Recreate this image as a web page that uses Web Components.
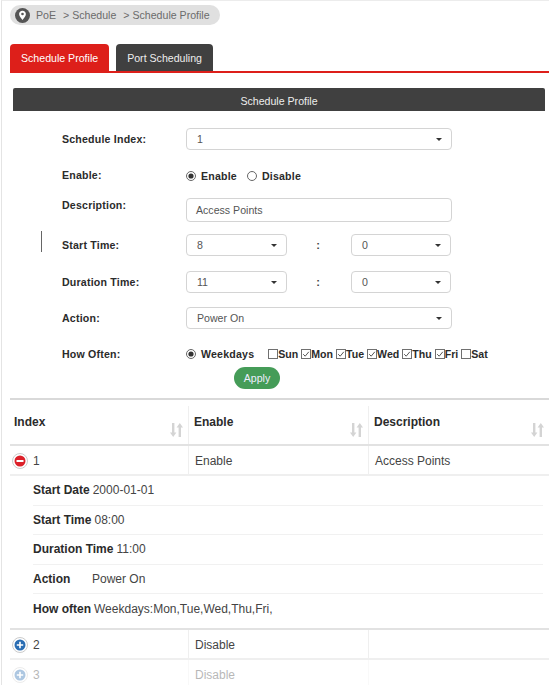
<!DOCTYPE html>
<html>
<head>
<meta charset="utf-8">
<title>Schedule Profile</title>
<style>
    html, body { margin: 0; height: 685px; overflow: hidden; background: #fff; }
    body { font-family: "Liberation Sans", Arial, sans-serif; color: #333; }
    .frame {
        display: block;
        height: 684px;
        margin-left: 1px;
        padding-left: 8px;
        border-top: 1px solid #ececec;
        border-left: 1px solid #e4e4e4;
        width: 539px;
    }
</style>
</head>
<body>
<div class="frame">
    <crumb-bar>
        <span>PoE</span><span>&gt; Schedule</span><span>&gt; Schedule Profile</span>
    </crumb-bar>
    <tab-bar>
        <tab-item active>Schedule Profile</tab-item>
        <tab-item>Port Scheduling</tab-item>
    </tab-bar>
    <panel-heading>Schedule Profile</panel-heading>
    <profile-form>
        <form-row label="Schedule Index:" style="--top:0px">
            <drop-select value="1"></drop-select>
        </form-row>
        <form-row label="Enable:" style="--top:15px;--lift:2px">
            <radio-option checked>Enable</radio-option>
            <radio-option>Disable</radio-option>
        </form-row>
        <form-row label="Description:" style="--top:11px;--lift:10px">
            <text-box value="Access Points"></text-box>
        </form-row>
        <form-row label="Start Time:" style="--top:12px" marked>
            <time-pair hour="8" minute="0"></time-pair>
        </form-row>
        <form-row label="Duration Time:" style="--top:15px">
            <time-pair hour="11" minute="0"></time-pair>
        </form-row>
        <form-row label="Action:" style="--top:14px">
            <drop-select value="Power On"></drop-select>
        </form-row>
        <form-row label="How Often:" style="--top:14px">
            <radio-option checked style="--after:14px">Weekdays</radio-option>
            <day-check>Sun</day-check>
            <day-check checked>Mon</day-check>
            <day-check checked>Tue</day-check>
            <day-check checked>Wed</day-check>
            <day-check checked>Thu</day-check>
            <day-check checked>Fri</day-check>
            <day-check>Sat</day-check>
        </form-row>
        <apply-button>Apply</apply-button>
    </profile-form>
    <data-table>
        <head-row>
            <head-cell>Index</head-cell>
            <head-cell>Enable</head-cell>
            <head-cell>Description</head-cell>
        </head-row>
        <body-row state="open" index="1" enable="Enable" description="Access Points"></body-row>
        <detail-list>
            <detail-item label="Start Date">2000-01-01</detail-item>
            <detail-item label="Start Time">08:00</detail-item>
            <detail-item label="Duration Time">11:00</detail-item>
            <detail-item label="Action" wide>Power On</detail-item>
            <detail-item label="How often" last>Weekdays:Mon,Tue,Wed,Thu,Fri,</detail-item>
        </detail-list>
        <body-row state="closed" index="2" enable="Disable"></body-row>
        <body-row state="closed" index="3" enable="Disable" style="opacity:.38"></body-row>
    </data-table>
</div>

<script>
class CrumbBar extends HTMLElement {
    constructor() {
        super()
        this.attachShadow({ mode: 'open' })
    }
    connectedCallback() {
        this.shadowRoot.innerHTML = `
            <style>
                :host {
                    display: flex;
                    align-items: center;
                    width: 210px;
                    height: 20px;
                    margin-top: 4px;
                    box-sizing: border-box;
                    padding-left: 5px;
                    border-radius: 10px;
                    background: #e0e0e0;
                    font-size: 10.6px;
                    color: #6b6b6b;
                }
                svg { width: 15px; height: 15px; margin-right: 6px; flex: none; }
                .items { display: flex; gap: 7px; white-space: nowrap; }
                ::slotted(span) { display: block; }
            </style>
            <svg viewBox="0 0 15 15">
                <circle cx="7.5" cy="7.5" r="7.5" fill="#555"/>
                <path d="M7.5 2.8c-2 0-3.4 1.4-3.4 3.3 0 2.2 2.3 4.4 3.4 6 1.1-1.6 3.4-3.8 3.4-6 0-1.9-1.4-3.3-3.4-3.3z" fill="#fff"/>
                <circle cx="7.5" cy="6" r="1.3" fill="#555"/>
            </svg>
            <div class="items"><slot></slot></div>
        `
    }
}
customElements.define('crumb-bar', CrumbBar)

class TabBar extends HTMLElement {
    constructor() {
        super()
        this.attachShadow({ mode: 'open' })
    }
    connectedCallback() {
        this.shadowRoot.innerHTML = `
            <style>
                :host {
                    display: flex;
                    gap: 7px;
                    align-items: flex-start;
                    height: 27px;
                    margin-top: 19px;
                    border-bottom: 2px solid #dd1f1a;
                }
            </style>
            <slot></slot>
        `
    }
}
customElements.define('tab-bar', TabBar)

class TabItem extends HTMLElement {
    constructor() {
        super()
        this.attachShadow({ mode: 'open' })
    }
    connectedCallback() {
        this.shadowRoot.innerHTML = `
            <style>
                :host {
                    display: block;
                    height: 27px;
                    line-height: 28px;
                    padding: 0 11px;
                    border-radius: 4px 4px 0 0;
                    background: #404040;
                    color: #eee;
                    font-size: 10.6px;
                    white-space: nowrap;
                }
                :host([active]) {
                    height: 29px;
                    background: #dd1f1a;
                    color: #fff;
                }
            </style>
            <slot></slot>
        `
    }
}
customElements.define('tab-item', TabItem)

class PanelHeading extends HTMLElement {
    constructor() {
        super()
        this.attachShadow({ mode: 'open' })
    }
    connectedCallback() {
        this.shadowRoot.innerHTML = `
            <style>
                :host {
                    display: block;
                    width: 532px;
                    height: 23px;
                    margin: 15px 0 0 3px;
                    border-radius: 2px 2px 0 0;
                    background: #404040;
                    color: #eee;
                    text-align: center;
                    font-size: 10.6px;
                    line-height: 26px;
                }
            </style>
            <slot></slot>
        `
    }
}
customElements.define('panel-heading', PanelHeading)

class ProfileForm extends HTMLElement {
    constructor() {
        super()
        this.attachShadow({ mode: 'open' })
    }
    connectedCallback() {
        this.shadowRoot.innerHTML = `
            <style>
                :host {
                    display: block;
                    position: relative;
                    margin-top: 17px;
                    padding-left: 52px;
                }
            </style>
            <slot></slot>
        `
    }
}
customElements.define('profile-form', ProfileForm)

class FormRow extends HTMLElement {
    constructor() {
        super()
        this.attachShadow({ mode: 'open' })
    }
    connectedCallback() {
        this.shadowRoot.innerHTML = `
            <style>
                :host {
                    display: flex;
                    align-items: center;
                    position: relative;
                    min-height: 22px;
                    margin-top: var(--top, 0);
                }
                .label {
                    width: 124px;
                    flex: none;
                    padding-bottom: var(--lift, 0);
                    font-size: 10.6px;
                    font-weight: bold;
                    letter-spacing: .2px;
                    color: #2b2b2b;
                }
                .tick {
                    display: none;
                    position: absolute;
                    left: -21px;
                    top: -3px;
                    width: 1px;
                    height: 21px;
                    background: #666;
                }
                :host([marked]) .tick { display: block; }
                .control { display: flex; align-items: center; flex: 1; }
            </style>
            <div class="tick"></div>
            <div class="label">${this.getAttribute('label')}</div>
            <div class="control"><slot></slot></div>
        `
    }
}
customElements.define('form-row', FormRow)

class DropSelect extends HTMLElement {
    constructor() {
        super()
        this.attachShadow({ mode: 'open' })
    }
    connectedCallback() {
        this.shadowRoot.innerHTML = `
            <style>
                :host {
                    display: flex;
                    align-items: center;
                    justify-content: space-between;
                    box-sizing: border-box;
                    width: var(--width, 266px);
                    height: 22px;
                    padding: 0 9px 0 10px;
                    border: 1px solid #d4d4d4;
                    border-radius: 4px;
                    background: #fff;
                    font-size: 10.6px;
                    color: #555;
                }
                i {
                    width: 0;
                    height: 0;
                    border-left: 3px solid transparent;
                    border-right: 3px solid transparent;
                    border-top: 3px solid #333;
                }
            </style>
            <span>${this.getAttribute('value')}</span><i></i>
        `
    }
}
customElements.define('drop-select', DropSelect)

class TimePair extends HTMLElement {
    constructor() {
        super()
        this.attachShadow({ mode: 'open' })
    }
    connectedCallback() {
        this.shadowRoot.innerHTML = `
            <style>
                :host { display: flex; align-items: center; }
                drop-select { --width: 101px; }
                drop-select.end { --width: 100px; }
                .sep {
                    box-sizing: border-box;
                    width: 64px;
                    padding-right: 2px;
                    text-align: center;
                    font-size: 11px;
                    font-weight: bold;
                    color: #444;
                }
            </style>
            <drop-select value="${this.getAttribute('hour')}"></drop-select>
            <div class="sep">:</div>
            <drop-select class="end" value="${this.getAttribute('minute')}"></drop-select>
        `
    }
}
customElements.define('time-pair', TimePair)

class TextBox extends HTMLElement {
    constructor() {
        super()
        this.attachShadow({ mode: 'open' })
    }
    connectedCallback() {
        this.shadowRoot.innerHTML = `
            <style>
                :host {
                    display: flex;
                    align-items: center;
                    box-sizing: border-box;
                    width: 266px;
                    height: 24px;
                    padding-left: 9px;
                    border: 1px solid #d4d4d4;
                    border-radius: 4px;
                    font-size: 10.6px;
                    color: #555;
                }
            </style>
            ${this.getAttribute('value')}
        `
    }
}
customElements.define('text-box', TextBox)

class RadioOption extends HTMLElement {
    constructor() {
        super()
        this.attachShadow({ mode: 'open' })
    }
    connectedCallback() {
        this.shadowRoot.innerHTML = `
            <style>
                :host {
                    display: flex;
                    align-items: center;
                    gap: 5px;
                    margin-right: var(--after, 10px);
                    font-size: 10.6px;
                    font-weight: bold;
                    letter-spacing: .2px;
                    color: #2b2b2b;
                    white-space: nowrap;
                }
                svg { width: 10px; height: 10px; flex: none; }
                .dot { display: none; }
                :host([checked]) .dot { display: inline; }
            </style>
            <svg viewBox="0 0 10 10">
                <circle cx="5" cy="5" r="4.5" fill="#fff" stroke="#666"/>
                <circle class="dot" cx="5" cy="5" r="2.6" fill="#333"/>
            </svg>
            <slot></slot>
        `
    }
}
customElements.define('radio-option', RadioOption)

class DayCheck extends HTMLElement {
    constructor() {
        super()
        this.attachShadow({ mode: 'open' })
    }
    connectedCallback() {
        this.shadowRoot.innerHTML = `
            <style>
                :host {
                    display: flex;
                    align-items: center;
                    margin-right: 3px;
                    font-size: 10.6px;
                    font-weight: bold;
                    color: #2b2b2b;
                    white-space: nowrap;
                }
                svg { width: 10px; height: 10px; flex: none; }
                .mark { display: none; }
                :host([checked]) .mark { display: inline; }
            </style>
            <svg viewBox="0 0 10 10">
                <rect x=".5" y=".5" width="9" height="9" fill="#fff" stroke="#707070"/>
                <path class="mark" d="M2.2 5.2l2 2 3.6-4.4" fill="none" stroke="#555" stroke-width="1"/>
            </svg>
            <slot></slot>
        `
    }
}
customElements.define('day-check', DayCheck)

class ApplyButton extends HTMLElement {
    constructor() {
        super()
        this.attachShadow({ mode: 'open' })
    }
    connectedCallback() {
        this.shadowRoot.innerHTML = `
            <style>
                :host {
                    display: block;
                    width: 46px;
                    height: 22px;
                    margin: 2px 0 0 172px;
                    border-radius: 11px;
                    background: #459c58;
                    color: #eef;
                    text-align: center;
                    font-size: 10.6px;
                    line-height: 22px;
                }
            </style>
            <slot></slot>
        `
    }
}
customElements.define('apply-button', ApplyButton)

class DataTable extends HTMLElement {
    constructor() {
        super()
        this.attachShadow({ mode: 'open' })
    }
    connectedCallback() {
        this.shadowRoot.innerHTML = `
            <style>
                :host {
                    display: block;
                    margin-top: 9px;
                    border-top: 2px solid #d9d9d9;
                }
            </style>
            <slot></slot>
        `
    }
}
customElements.define('data-table', DataTable)

class HeadRow extends HTMLElement {
    constructor() {
        super()
        this.attachShadow({ mode: 'open' })
    }
    connectedCallback() {
        this.shadowRoot.innerHTML = `
            <style>
                :host {
                    display: grid;
                    grid-template-columns: 179px 180px 180px;
                    box-sizing: border-box;
                    height: 46px;
                    padding-top: 6px;
                    border-bottom: 2px solid #e2e2e2;
                }
            </style>
            <slot></slot>
        `
    }
}
customElements.define('head-row', HeadRow)

class HeadCell extends HTMLElement {
    constructor() {
        super()
        this.attachShadow({ mode: 'open' })
    }
    connectedCallback() {
        this.shadowRoot.innerHTML = `
            <style>
                :host {
                    display: block;
                    position: relative;
                    box-sizing: border-box;
                    padding: 9px 0 0 5px;
                    font-size: 12px;
                    font-weight: bold;
                    color: #2b2b2b;
                    border-right: 1px solid #efefef;
                }
                :host(:first-child) { padding-left: 4px; }
                :host(:last-child) { border-right: 0; }
                svg {
                    position: absolute;
                    right: 5px;
                    bottom: 7px;
                    width: 13px;
                    height: 14px;
                }
            </style>
            <slot></slot>
            <svg viewBox="0 0 13 14" fill="#d4d4d4">
                <path d="M2 0h2.4v9.5H6.4L3.2 14 0 9.5h2z"/>
                <path d="M8.6 14h2.4V4.5h2L9.800 0 6.600 4.500h2z"/>
            </svg>
        `
    }
}
customElements.define('head-cell', HeadCell)

class BodyRow extends HTMLElement {
    constructor() {
        super()
        this.attachShadow({ mode: 'open' })
    }
    getIcon() {
        if (this.getAttribute('state') === 'open') {
            return `<circle cx="9" cy="9" r="7.500" fill="#fff" stroke="#ccc"/>
                <circle cx="9" cy="9" r="5.500" fill="#dc2029"/>
                <rect x="5.500" y="8" width="7" height="2" fill="#fff"/>`
        }
        return `<circle cx="9" cy="9" r="7.500" fill="#fff" stroke="#ccc"/>
            <circle cx="9" cy="9" r="5.500" fill="#2a6db3"/>
            <path d="M8.200 5.800h1.600v2.400h2.400v1.600H9.800v2.400H8.200V9.800H5.800V8.200h2.400z" fill="#fff"/>`
    }
    connectedCallback() {
        this.shadowRoot.innerHTML = `
            <style>
                :host {
                    display: grid;
                    grid-template-columns: 179px 180px 180px;
                    box-sizing: border-box;
                    height: 30px;
                    font-size: 12px;
                    color: #444;
                    border-bottom: 2px solid #efefef;
                }
                .cell {
                    display: flex;
                    align-items: center;
                    box-sizing: border-box;
                    padding: 1px 0 0 6px;
                    border-right: 1px solid #efefef;
                }
                .cell:first-of-type { padding-left: 1px; }
                .cell:last-of-type { border-right: 0; }
                svg { width: 18px; height: 18px; margin-right: 4px; flex: none; }
            </style>
            <div class="cell"><svg viewBox="0 0 18 18">${this.getIcon()}</svg>${this.getAttribute('index')}</div>
            <div class="cell">${this.getAttribute('enable')}</div>
            <div class="cell">${this.getAttribute('description') || ''}</div>
        `
    }
}
customElements.define('body-row', BodyRow)

class DetailList extends HTMLElement {
    constructor() {
        super()
        this.attachShadow({ mode: 'open' })
    }
    connectedCallback() {
        this.shadowRoot.innerHTML = `
            <style>
                :host {
                    display: block;
                    padding: 0 6px 0 23px;
                    border-bottom: 2px solid #e2e2e2;
                }
            </style>
            <slot></slot>
        `
    }
}
customElements.define('detail-list', DetailList)

class DetailItem extends HTMLElement {
    constructor() {
        super()
        this.attachShadow({ mode: 'open' })
    }
    connectedCallback() {
        this.shadowRoot.innerHTML = `
            <style>
                :host {
                    display: flex;
                    gap: 3px;
                    box-sizing: border-box;
                    height: 29.600px;
                    padding-top: 7px;
                    font-size: 12px;
                    color: #444;
                    border-bottom: 1px solid #f1f1f1;
                    white-space: nowrap;
                }
                :host([last]) { height: 34px; padding-top: 8px; border-bottom: 0; }
                b { color: #2b2b2b; }
                :host([wide]) b { width: 56px; }
            </style>
            <b>${this.getAttribute('label')}</b>
            <span><slot></slot></span>
        `
    }
}
customElements.define('detail-item', DetailItem)
</script>
</body>
</html>
